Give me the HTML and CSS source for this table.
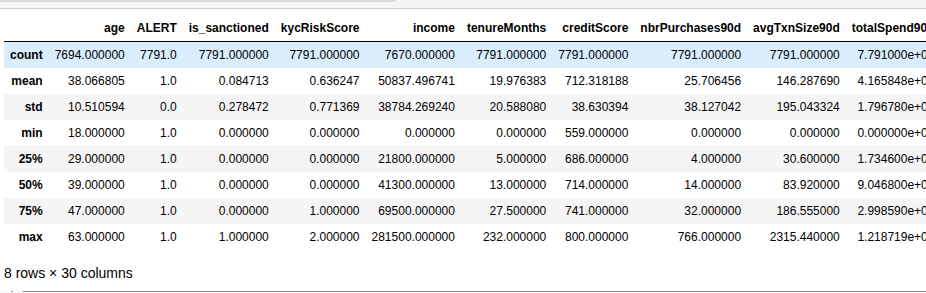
FILE: index.html
```html
<!DOCTYPE html>
<html lang="en">
<head>
    <meta charset="UTF-8">
    <title>describe()</title>
    <link rel="stylesheet" href="styles.css">
</head>
<body>
    <div class="prev-scroll">
        <div class="prev-thumb"></div>
    </div>

    <div class="output">
        <div class="df-wrap">
            <table class="dataframe">
                <thead>
                    <tr>
                        <th></th>
                        <th>age</th>
                        <th>ALERT</th>
                        <th>is_sanctioned</th>
                        <th>kycRiskScore</th>
                        <th>income</th>
                        <th>tenureMonths</th>
                        <th>creditScore</th>
                        <th>nbrPurchases90d</th>
                        <th>avgTxnSize90d</th>
                        <th>totalSpend90d</th>
                    </tr>
                </thead>
                <tbody>
                    <tr class="hover">
                        <th>count</th>
                        <td>7694.000000</td><td>7791.0</td><td>7791.000000</td><td>7791.000000</td><td>7670.000000</td>
                        <td>7791.000000</td><td>7791.000000</td><td>7791.000000</td><td>7791.000000</td><td>7.791000e+03</td>
                    </tr>
                    <tr>
                        <th>mean</th>
                        <td>38.066805</td><td>1.0</td><td>0.084713</td><td>0.636247</td><td>50837.496741</td>
                        <td>19.976383</td><td>712.318188</td><td>25.706456</td><td>146.287690</td><td>4.165848e+03</td>
                    </tr>
                    <tr>
                        <th>std</th>
                        <td>10.510594</td><td>0.0</td><td>0.278472</td><td>0.771369</td><td>38784.269240</td>
                        <td>20.588080</td><td>38.630394</td><td>38.127042</td><td>195.043324</td><td>1.796780e+04</td>
                    </tr>
                    <tr>
                        <th>min</th>
                        <td>18.000000</td><td>1.0</td><td>0.000000</td><td>0.000000</td><td>0.000000</td>
                        <td>0.000000</td><td>559.000000</td><td>0.000000</td><td>0.000000</td><td>0.000000e+00</td>
                    </tr>
                    <tr>
                        <th>25%</th>
                        <td>29.000000</td><td>1.0</td><td>0.000000</td><td>0.000000</td><td>21800.000000</td>
                        <td>5.000000</td><td>686.000000</td><td>4.000000</td><td>30.600000</td><td>1.734600e+02</td>
                    </tr>
                    <tr>
                        <th>50%</th>
                        <td>39.000000</td><td>1.0</td><td>0.000000</td><td>0.000000</td><td>41300.000000</td>
                        <td>13.000000</td><td>714.000000</td><td>14.000000</td><td>83.920000</td><td>9.046800e+02</td>
                    </tr>
                    <tr>
                        <th>75%</th>
                        <td>47.000000</td><td>1.0</td><td>0.000000</td><td>1.000000</td><td>69500.000000</td>
                        <td>27.500000</td><td>741.000000</td><td>32.000000</td><td>186.555000</td><td>2.998590e+03</td>
                    </tr>
                    <tr>
                        <th>max</th>
                        <td>63.000000</td><td>1.0</td><td>1.000000</td><td>2.000000</td><td>281500.000000</td>
                        <td>232.000000</td><td>800.000000</td><td>766.000000</td><td>2315.440000</td><td>1.218719e+06</td>
                    </tr>
                </tbody>
            </table>
        </div>
        <p class="df-shape">8 rows × 30 columns</p>
    </div>

    <div class="next-scroll">
        <span class="next-dot"></span>
        <div class="next-thumb"></div>
    </div>
</body>
</html>
```

FILE: styles.css
```css
body {
    margin: 0;
    font-family: "Liberation Sans", Arial, sans-serif;
    color: #000;
    background: #fff;
    overflow: hidden;
}

/* scrollbar left over from the cell above */
.prev-scroll {
    height: 8px;
    background: #f5f5f5;
    border-bottom: 1px solid #d0d0d0;
}

.prev-thumb {
    width: 396px;
    height: 2px;
    background: #dadada;
}

.output {
    padding: 6px 0 0 4px;
}

.df-wrap {
    overflow: hidden;
}

.dataframe {
    border: none;
    border-collapse: collapse;
    border-spacing: 0;
    font-size: 12px;
    color: #000;
    white-space: nowrap;
}

.dataframe thead {
    border-bottom: 1px solid #000;
    vertical-align: bottom;
}

.dataframe th,
.dataframe td {
    text-align: right;
    vertical-align: middle;
    padding: 6px;
    line-height: 14px;
    border: none;
}

.dataframe th {
    font-weight: bold;
}

.dataframe tbody tr:nth-child(odd) {
    background: #f5f5f5;
}

.dataframe tbody tr.hover {
    background: #d9edfd;
}

.df-shape {
    margin: 15px 0 9px 0;
    font-size: 14px;
    line-height: 16px;
}

/* top edge of the next cell's scroll area */
.next-scroll {
    display: flex;
    align-items: flex-end;
    height: 3px;
    background: #fafafa;
}

.next-dot {
    width: 2px;
    height: 1px;
    margin: 0 10px 1px 11px;
    background: #9a9a9a;
}

.next-thumb {
    flex: 1;
    height: 1px;
    margin-bottom: 1px;
    background: #8a8a8a;
}
```
